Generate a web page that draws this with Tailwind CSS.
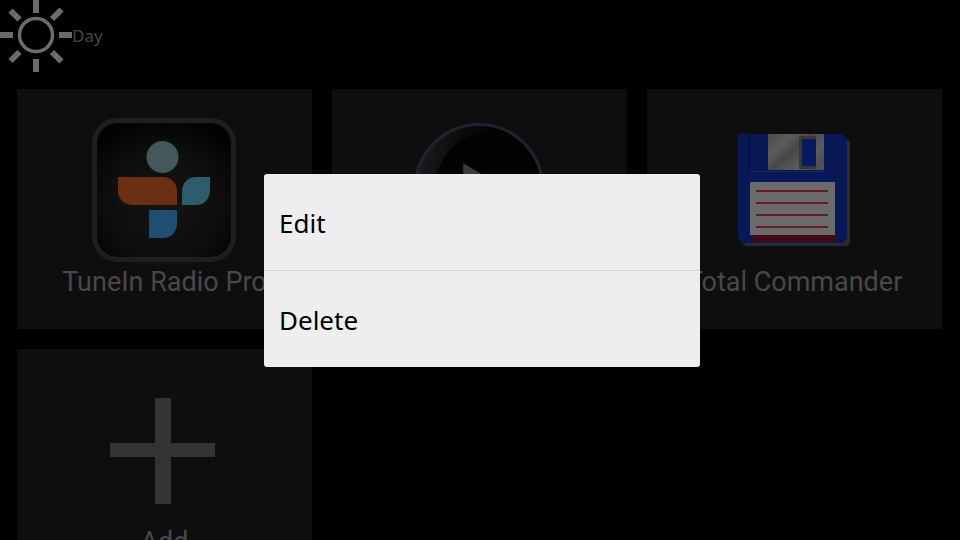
<!DOCTYPE html>
<html lang="en">
<head>
    <meta charset="UTF-8">
    <meta name="viewport" content="width=device-width, initial-scale=1.0">
    <title>Day</title>
    <script src="https://cdn.jsdelivr.net/npm/@tailwindcss/browser@4"></script>
</head>
<body class="relative h-screen overflow-hidden bg-black font-['Roboto',sans-serif] text-[#484848]">

    <!-- Mode header -->
    <header class="flex h-[72px] items-center">
        <svg class="size-[72px]" viewBox="0 0 72 72" fill="none" stroke="#6b6b6b" aria-hidden="true">
            <circle cx="36" cy="35" r="16.5" stroke-width="3.5"/>
            <path stroke-width="6" d="M36 0v13M36 59v13M0 35h13M59 35h13M10.500 10.500l9 9M52 19l9.500-9.500M10.500 61l9-9M52 52l9.500 9.500"/>
        </svg>
        <h1 class="font-['Noto_Sans',sans-serif] text-[17px]">Day</h1>
    </header>

    <!-- App tiles -->
    <main class="grid grid-cols-3 gap-5 pt-[17px] pr-[18px] pl-[17px]">
        <button type="button" class="flex h-[240px] flex-col items-center bg-[#0e0e0e] pt-[29px]">
            <svg class="mr-0.5 size-36 shrink-0" viewBox="0 0 144 144" aria-hidden="true">
                <defs>
                    <radialGradient id="tunein-bg" cx="0.5" cy="0.6" r="0.65">
                        <stop offset="0" stop-color="#141414"/>
                        <stop offset="0.6" stop-color="#0e0e0e"/>
                        <stop offset="1" stop-color="#020202"/>
                    </radialGradient>
                </defs>
                <rect x="2.500" y="2.500" width="139" height="139" rx="23" fill="url(#tunein-bg)" stroke="#1f1f1f" stroke-width="5"/>
                <circle cx="70.500" cy="39" r="16" fill="#43585a"/>
                <path fill="#6b3011" d="M26 59h44c9 0 15 6 15 14v14H41c-9 0-15-6-15-14z"/>
                <path fill="#2d5c6b" d="M118 59v13c0 9-6 15-14 15H90V74c0-9 6-15 14-15z"/>
                <path fill="#1f4f70" d="M57 92h28v13c0 9-6 15-14 15H57z"/>
            </svg>
            <span class="text-[27px] leading-10">TuneIn Radio Pro</span>
        </button>

        <button type="button" class="flex h-[240px] flex-col items-center bg-[#0e0e0e] pt-[29px]">
            <svg class="mr-0.5 size-36 shrink-0" viewBox="0 0 144 144" aria-hidden="true">
                <defs>
                    <linearGradient id="player-rim" x1="0" y1="0.3" x2="0.5" y2="0.45">
                        <stop offset="0" stop-color="#1c1c1e"/>
                        <stop offset="0.6" stop-color="#0a0a0b"/>
                        <stop offset="1" stop-color="#020203"/>
                    </linearGradient>
                </defs>
                <circle cx="72" cy="70" r="63.500" fill="url(#player-rim)" stroke="#20222e" stroke-width="3"/>
                <ellipse cx="80" cy="72" rx="52" ry="57" fill="#020203"/>
                <path fill="#3e3e40" stroke="#141224" stroke-width="1" d="M56 45l46 27-46 27z"/>
            </svg>
            <span class="text-[27px] leading-10">Music Player</span>
        </button>

        <button type="button" class="flex h-[240px] flex-col items-center bg-[#0e0e0e] pt-[29px]">
            <svg class="mr-0.5 size-36 shrink-0" viewBox="0 0 144 144" aria-hidden="true">
                <defs>
                    <linearGradient id="shutter" x1="0" y1="0" x2="1" y2="0.7">
                        <stop offset="0" stop-color="#4a4a4a"/>
                        <stop offset="0.3" stop-color="#5c5c5c"/>
                        <stop offset="0.5" stop-color="#484848"/>
                        <stop offset="0.8" stop-color="#5c5c5c"/>
                        <stop offset="1" stop-color="#505050"/>
                    </linearGradient>
                </defs>
                <path fill="#2b2b2b" d="M21 20h103l4 4v101l-3 3H24l-5-4z"/>
                <path fill="#081856" d="M17 16h103l5 5v99l-4 5H21l-5-5V18z"/>
                <path fill="none" stroke="#061143" stroke-width="2" d="M27 17v35"/>
                <path fill="none" stroke="#182560" stroke-width="1" d="M28 53.500h77"/>
                <rect x="46" y="16" width="56" height="36" fill="url(#shutter)"/>
                <rect x="77" y="18" width="17" height="33" fill="#383838"/>
                <rect x="80" y="21" width="14" height="27" fill="#081a62"/>
                <path fill="#430a14" d="M30 117h84v7H32z"/>
                <rect x="28" y="64" width="85" height="53" fill="#6b6b6b"/>
                <path fill="none" stroke="#6a1a26" stroke-width="2" d="M34 73h72M34 85h72M34 97h72M34 109h72"/>
            </svg>
            <span class="text-[27px] leading-10">Total Commander</span>
        </button>

        <button type="button" class="flex h-[240px] flex-col items-center bg-[#0e0e0e] pt-[29px]">
            <svg class="mr-0.5 size-36 shrink-0" viewBox="0 0 144 144" aria-hidden="true">
                <path fill="#333333" d="M63 20h16v45h44v14H79v47H63V79H18V65h45z"/>
            </svg>
            <span class="text-[27px] leading-10">Add</span>
        </button>
    </main>

    <!-- Context menu -->
    <div class="absolute inset-0 flex items-center justify-center pt-px pl-1">
        <div role="menu" class="flex w-[436px] flex-col divide-y divide-[#d4d4d4] overflow-hidden rounded-[3px] bg-[#eeeeee] font-['Noto_Sans',sans-serif] text-[26px] text-black">
            <button type="button" role="menuitem" class="h-[97px] px-[15px] pt-0.5 text-left">Edit</button>
            <button type="button" role="menuitem" class="h-24 px-[15px] pt-0.5 text-left">Delete</button>
        </div>
    </div>

</body>
</html>
